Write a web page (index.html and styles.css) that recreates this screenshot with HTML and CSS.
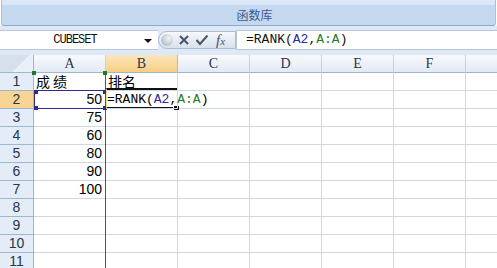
FILE: index.html
```html
<!DOCTYPE html>
<html lang="zh-CN">
<head>
  <meta charset="UTF-8">
  <title>RANK</title>
  <link rel="stylesheet" href="styles.css">
</head>
<body>
  <!-- Ribbon group -->
  <div class="ribbon">
    <div class="ribbon-top"></div>
    <div class="ribbon-label">函数库</div>
  </div>

  <!-- Formula bar -->
  <div class="formula-bar">
    <div class="name-box">
      <span class="name">CUBESET</span>
      <span class="arrow"></span>
    </div>
    <div class="fx-buttons">
      <span class="dimple"></span>
      <svg class="icon" width="12" height="12" viewBox="0 0 12 12">
        <path d="M2 2 L10 10 M10 2 L2 10" stroke="#45556a" stroke-width="2" fill="none"/>
      </svg>
      <svg class="icon" width="14" height="12" viewBox="0 0 14 12">
        <path d="M1.5 6 L5 10 L12.5 1.5" stroke="#45556a" stroke-width="2" fill="none"/>
      </svg>
      <span class="fx">f<span class="fx-x">x</span></span>
    </div>
    <div class="formula-input">=RANK(<span class="ref-a2">A2</span>,<span class="ref-col">A:A</span>)</div>
  </div>

  <!-- Sheet -->
  <div class="sheet">
    <div class="corner"></div>
    <div class="col-head">A</div>
    <div class="col-head selected">B</div>
    <div class="col-head">C</div>
    <div class="col-head">D</div>
    <div class="col-head">E</div>
    <div class="col-head">F</div>
    <div class="col-head"></div>

    <div class="row-head">1</div>
    <div class="cell wide">成绩</div>
    <div class="cell">排名</div>
    <div class="cell"></div><div class="cell"></div><div class="cell"></div><div class="cell"></div><div class="cell"></div>

    <div class="row-head selected">2</div>
    <div class="cell num">50</div>
    <div class="cell formula">=RANK(<span class="ref-a2">A2</span>,<span class="ref-col">A:A</span>)</div>
    <div class="cell"></div><div class="cell"></div><div class="cell"></div><div class="cell"></div><div class="cell"></div>

    <div class="row-head">3</div>
    <div class="cell num">75</div>
    <div class="cell"></div><div class="cell"></div><div class="cell"></div><div class="cell"></div><div class="cell"></div><div class="cell"></div>

    <div class="row-head">4</div>
    <div class="cell num">60</div>
    <div class="cell"></div><div class="cell"></div><div class="cell"></div><div class="cell"></div><div class="cell"></div><div class="cell"></div>

    <div class="row-head">5</div>
    <div class="cell num">80</div>
    <div class="cell"></div><div class="cell"></div><div class="cell"></div><div class="cell"></div><div class="cell"></div><div class="cell"></div>

    <div class="row-head">6</div>
    <div class="cell num">90</div>
    <div class="cell"></div><div class="cell"></div><div class="cell"></div><div class="cell"></div><div class="cell"></div><div class="cell"></div>

    <div class="row-head">7</div>
    <div class="cell num">100</div>
    <div class="cell"></div><div class="cell"></div><div class="cell"></div><div class="cell"></div><div class="cell"></div><div class="cell"></div>

    <div class="row-head">8</div>
    <div class="cell"></div><div class="cell"></div><div class="cell"></div><div class="cell"></div><div class="cell"></div><div class="cell"></div><div class="cell"></div>

    <div class="row-head">9</div>
    <div class="cell"></div><div class="cell"></div><div class="cell"></div><div class="cell"></div><div class="cell"></div><div class="cell"></div><div class="cell"></div>

    <div class="row-head">10</div>
    <div class="cell"></div><div class="cell"></div><div class="cell"></div><div class="cell"></div><div class="cell"></div><div class="cell"></div><div class="cell"></div>

    <div class="row-head">11</div>
    <div class="cell"></div><div class="cell"></div><div class="cell"></div><div class="cell"></div><div class="cell"></div><div class="cell"></div><div class="cell"></div>

    <!-- reference highlights drawn over the grid -->
    <div class="ref-box-col">
      <span class="handle tl"></span>
      <span class="handle tr"></span>
    </div>
    <div class="ref-box-a2">
      <span class="handle tl"></span>
      <span class="handle tr"></span>
      <span class="handle bl"></span>
      <span class="handle br"></span>
    </div>
    <div class="active-cell">
      <span class="fill-handle"></span>
    </div>
  </div>
</body>
</html>
```

FILE: styles.css
```css
html, body {
  margin: 0;
  padding: 0;
  overflow: hidden;
  background: #fff;
}
body {
  width: 497px;
  height: 268px;
  font-family: "Liberation Sans", Arial, sans-serif;
}

/* ribbon */
.ribbon {
  height: 26px;
  box-sizing: border-box;
  margin: 0 1px;
  border: 1px solid #a8c3e2;
  border-top: none;
  border-bottom: 1px solid #87a9d6;
  border-radius: 0 0 3px 3px;
  background: #c4d8ef;
}
.ribbon-top {
  height: 5px;
  background: #dbe7f6;
}
.ribbon-label {
  height: 20px;
  line-height: 19px;
  text-align: center;
  font-family: "Noto Sans CJK SC", sans-serif;
  font-size: 12px;
  color: #3d5a8c;
  padding-left: 12px;
}

/* formula bar */
.formula-bar {
  display: flex;
  height: 29px;
  box-sizing: border-box;
  padding: 4px 0 5px;
  background: #dfe8f5;
}
.name-box {
  width: 158px;
  display: flex;
  align-items: center;
  background: #fff;
  border-top: 1px solid #b6c8de;
  border-bottom: 1px solid #b6c8de;
  box-sizing: border-box;
}
.name {
  flex: 1;
  text-align: center;
  font-family: "Liberation Mono", monospace;
  font-size: 12px;
  letter-spacing: -1px;
  color: #111;
  padding-left: 6px;
}
.arrow {
  width: 0;
  height: 0;
  margin: 1px 6px 0 0;
  border-left: 4px solid transparent;
  border-right: 4px solid transparent;
  border-top: 4px solid #111;
}
.fx-buttons {
  width: 78px;
  margin: 1px 0;
  display: flex;
  align-items: center;
  gap: 5px;
  box-sizing: border-box;
  border: 1px solid #a9bdd5;
  border-radius: 9px 0 0 9px;
  background: linear-gradient(#f6f8fb, #d8e1ec);
}
.dimple {
  width: 12px;
  height: 12px;
  margin-left: 2px;
  border-radius: 50%;
  background: radial-gradient(circle at 65% 35%, #f4f4f4, #b9c2cc 70%);
}
.icon {
  display: block;
}
.fx {
  font-family: "Liberation Serif", serif;
  font-style: italic;
  font-size: 15px;
  color: #45556a;
  margin-left: 2px;
  line-height: 1;
}
.fx-x {
  font-size: 11px;
}
.formula-input {
  flex: 1;
  background: #fff;
  border: 1px solid #b6c8de;
  border-right: none;
  box-sizing: border-box;
  padding-left: 9px;
  font-family: "Liberation Mono", monospace;
  font-size: 13px;
  line-height: 18px;
  color: #111;
  white-space: nowrap;
}
.ref-a2 {
  color: #2b2aa0;
}
.ref-col {
  color: #1f7a2a;
}

/* sheet grid */
.sheet {
  position: relative;
  display: grid;
  grid-template-columns: 34px repeat(7, 72px);
  grid-auto-rows: 18px;
  font-size: 14px;
}
.sheet > div {
  box-sizing: border-box;
}
.corner {
  border-right: 1px solid #9eb6ce;
  border-bottom: 1px solid #9eb6ce;
  background: linear-gradient(135deg, #d7e1ed 60%, #eaf0f8 60%);
}
.col-head {
  border-right: 1px solid #c5d3e3;
  border-bottom: 1px solid #9eb6ce;
  background: linear-gradient(#f8fafd, #e2eaf4);
  text-align: center;
  font-family: "Liberation Serif", serif;
  line-height: 17px;
  color: #27374d;
}
.col-head.selected {
  background: linear-gradient(#fbe6bd, #f7cf84);
  border-right-color: #e5b463;
}
.row-head {
  border-right: 1px solid #9eb6ce;
  border-bottom: 1px solid #9eb6ce;
  background: #e4ecf7;
  text-align: center;
  line-height: 17px;
  color: #27374d;
}
.row-head.selected {
  background: #f8d594;
}
.cell {
  border-right: 1px solid #d0d7e5;
  border-bottom: 1px solid #d0d7e5;
  padding: 0 2px;
  line-height: 17px;
  white-space: nowrap;
  font-family: "Noto Sans CJK SC", sans-serif;
  color: #000;
}
.cell.wide {
  letter-spacing: 3px;
}
.cell.num {
  text-align: right;
  padding-right: 3px;
  font-family: "Liberation Sans", Arial, sans-serif;
}
.cell.formula {
  font-family: "Liberation Mono", monospace;
  font-size: 13px;
  position: relative;
  z-index: 1;
  padding-left: 1px;
}

/* reference outlines (offsets are relative to the sheet) */
.ref-box-col {
  position: absolute;
  left: 33px;
  top: 17px;
  width: 73px;
  bottom: 0;
  border-right: 1px solid #1c7a2c;
  box-sizing: border-box;
}
.ref-box-a2 {
  position: absolute;
  left: 34px;
  top: 35px;
  width: 71px;
  height: 19px;
  border: 1px solid #2e2a92;
  border-right: none;
  box-sizing: border-box;
}
.handle {
  position: absolute;
  width: 4px;
  height: 4px;
  background: #2e2a92;
}
.ref-box-col .handle {
  background: #1c7a2c;
}
.handle.tl { left: -1px; top: -1px; }
.handle.tr { right: -2px; top: -1px; }
.handle.bl { left: -1px; bottom: -2px; }
.handle.br { right: -2px; bottom: -2px; }
.active-cell {
  position: absolute;
  left: 106px;
  top: 33px;
  width: 71px;
  height: 21px;
  border-top: 2px solid #111;
  border-bottom: 2px solid #111;
  border-left: 1px solid #ece67a;
  box-sizing: border-box;
}
.fill-handle {
  position: absolute;
  right: -2px;
  bottom: -3px;
  width: 5px;
  height: 4px;
  background: #111;
  border-left: 1px solid #fff;
}
```
